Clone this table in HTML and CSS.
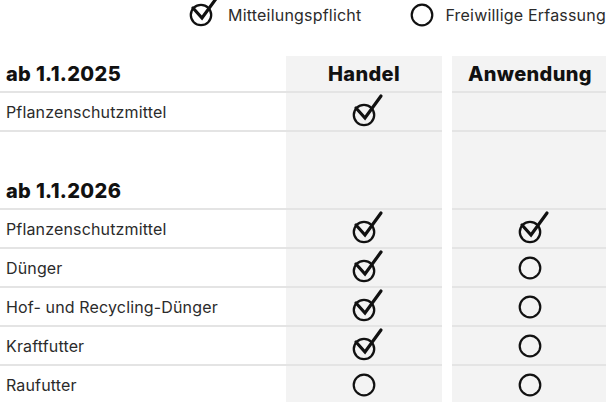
FILE: index.html
```html
<!DOCTYPE html>
<html lang="de">
<head>
<meta charset="utf-8">
<link rel="stylesheet" href="styles.css">
</head>
<body>
<div class="page">
  <div class="legend">
    <svg class="ico-check legend-check" viewBox="0 0 40 38" width="40" height="38"><circle cx="20" cy="22" r="10.2" fill="none" stroke="#111" stroke-width="2.3"/><path d="M12 15 L21 25 L37 3" fill="none" stroke="#111" stroke-width="3.2" stroke-linecap="round"/></svg>
    <span class="legend-text">Mitteilungspflicht</span>
    <svg class="ico-circle legend-circle" viewBox="0 0 24 24" width="24" height="24"><circle cx="12" cy="12" r="10.3" fill="none" stroke="#111" stroke-width="2.2"/></svg>
    <span class="legend-text legend-text2">Freiwillige Erfassung</span>
  </div>

  <div class="table">
    <div class="row head">
      <div class="label title">ab 1.1.2025</div>
      <div class="cell title">Handel</div>
      <div class="cell title second">Anwendung</div>
    </div>
    <div class="row">
      <div class="label">Pflanzenschutzmittel</div>
      <div class="cell"><svg class="ico-check" viewBox="0 0 40 38" width="40" height="38"><circle cx="20" cy="22" r="10.2" fill="none" stroke="#111" stroke-width="2.3"/><path d="M12 15 L21 25 L37 3" fill="none" stroke="#111" stroke-width="3.2" stroke-linecap="round"/></svg></div>
      <div class="cell second"></div>
    </div>
    <div class="row spacer">
      <div class="label"></div>
      <div class="cell"></div>
      <div class="cell second"></div>
    </div>
    <div class="row head">
      <div class="label title">ab 1.1.2026</div>
      <div class="cell"></div>
      <div class="cell second"></div>
    </div>
    <div class="row">
      <div class="label">Pflanzenschutzmittel</div>
      <div class="cell"><svg class="ico-check" viewBox="0 0 40 38" width="40" height="38"><circle cx="20" cy="22" r="10.2" fill="none" stroke="#111" stroke-width="2.3"/><path d="M12 15 L21 25 L37 3" fill="none" stroke="#111" stroke-width="3.2" stroke-linecap="round"/></svg></div>
      <div class="cell second"><svg class="ico-check" viewBox="0 0 40 38" width="40" height="38"><circle cx="20" cy="22" r="10.2" fill="none" stroke="#111" stroke-width="2.3"/><path d="M12 15 L21 25 L37 3" fill="none" stroke="#111" stroke-width="3.2" stroke-linecap="round"/></svg></div>
    </div>
    <div class="row">
      <div class="label">Dünger</div>
      <div class="cell"><svg class="ico-check" viewBox="0 0 40 38" width="40" height="38"><circle cx="20" cy="22" r="10.2" fill="none" stroke="#111" stroke-width="2.3"/><path d="M12 15 L21 25 L37 3" fill="none" stroke="#111" stroke-width="3.2" stroke-linecap="round"/></svg></div>
      <div class="cell second"><svg class="ico-circle" viewBox="0 0 24 24" width="24" height="24"><circle cx="12" cy="12" r="10.3" fill="none" stroke="#111" stroke-width="2.2"/></svg></div>
    </div>
    <div class="row">
      <div class="label">Hof- und Recycling-Dünger</div>
      <div class="cell"><svg class="ico-check" viewBox="0 0 40 38" width="40" height="38"><circle cx="20" cy="22" r="10.2" fill="none" stroke="#111" stroke-width="2.3"/><path d="M12 15 L21 25 L37 3" fill="none" stroke="#111" stroke-width="3.2" stroke-linecap="round"/></svg></div>
      <div class="cell second"><svg class="ico-circle" viewBox="0 0 24 24" width="24" height="24"><circle cx="12" cy="12" r="10.3" fill="none" stroke="#111" stroke-width="2.2"/></svg></div>
    </div>
    <div class="row">
      <div class="label">Kraftfutter</div>
      <div class="cell"><svg class="ico-check" viewBox="0 0 40 38" width="40" height="38"><circle cx="20" cy="22" r="10.2" fill="none" stroke="#111" stroke-width="2.3"/><path d="M12 15 L21 25 L37 3" fill="none" stroke="#111" stroke-width="3.2" stroke-linecap="round"/></svg></div>
      <div class="cell second"><svg class="ico-circle" viewBox="0 0 24 24" width="24" height="24"><circle cx="12" cy="12" r="10.3" fill="none" stroke="#111" stroke-width="2.2"/></svg></div>
    </div>
    <div class="row">
      <div class="label">Raufutter</div>
      <div class="cell"><svg class="ico-circle" viewBox="0 0 24 24" width="24" height="24"><circle cx="12" cy="12" r="10.3" fill="none" stroke="#111" stroke-width="2.2"/></svg></div>
      <div class="cell second"><svg class="ico-circle" viewBox="0 0 24 24" width="24" height="24"><circle cx="12" cy="12" r="10.3" fill="none" stroke="#111" stroke-width="2.2"/></svg></div>
    </div>
  </div>
</div>
</body>
</html>
```

FILE: styles.css
```css
html, body {
  margin: 0;
  padding: 0;
  background: #fff;
  overflow: hidden;
}
body {
  font-family: Inter, "Noto Sans", sans-serif;
  color: #2b2b2b;
}
.page {
  width: 608px;
}
.legend {
  display: flex;
  align-items: center;
  height: 30px;
  padding-left: 181px;
  margin-bottom: 26px;
  font-size: 16px;
  letter-spacing: 0.2px;
}
.legend-check {
  margin-top: -6px;
}
.legend-text {
  margin-left: 7px;
}
.legend-circle {
  margin-left: 49px;
}
.legend-text2 {
  margin-left: 11px;
}
.table {
  display: flex;
  flex-direction: column;
}
.row {
  display: flex;
  height: 39px;
}
.row.head {
  height: 37px;
}
.row.spacer {
  height: 41px;
}
.label {
  width: 286px;
  box-sizing: border-box;
  padding-left: 6px;
  display: flex;
  align-items: center;
  font-size: 16px;
  letter-spacing: 0.15px;
  border-bottom: 2px solid #e4e4e4;
}
.cell {
  width: 156px;
  box-sizing: border-box;
  background: #f3f3f3;
  display: flex;
  align-items: center;
  justify-content: center;
  border-bottom: 2px solid #e4e4e4;
}
.cell.second {
  margin-left: 10px;
}
.spacer .label,
.spacer .cell {
  border-bottom: none;
}
.title {
  font-size: 20px;
  font-weight: 800;
  color: #111;
  letter-spacing: 0.35px;
}
.ico-check {
  display: block;
  flex: none;
}
.ico-circle {
  display: block;
  flex: none;
}
```
